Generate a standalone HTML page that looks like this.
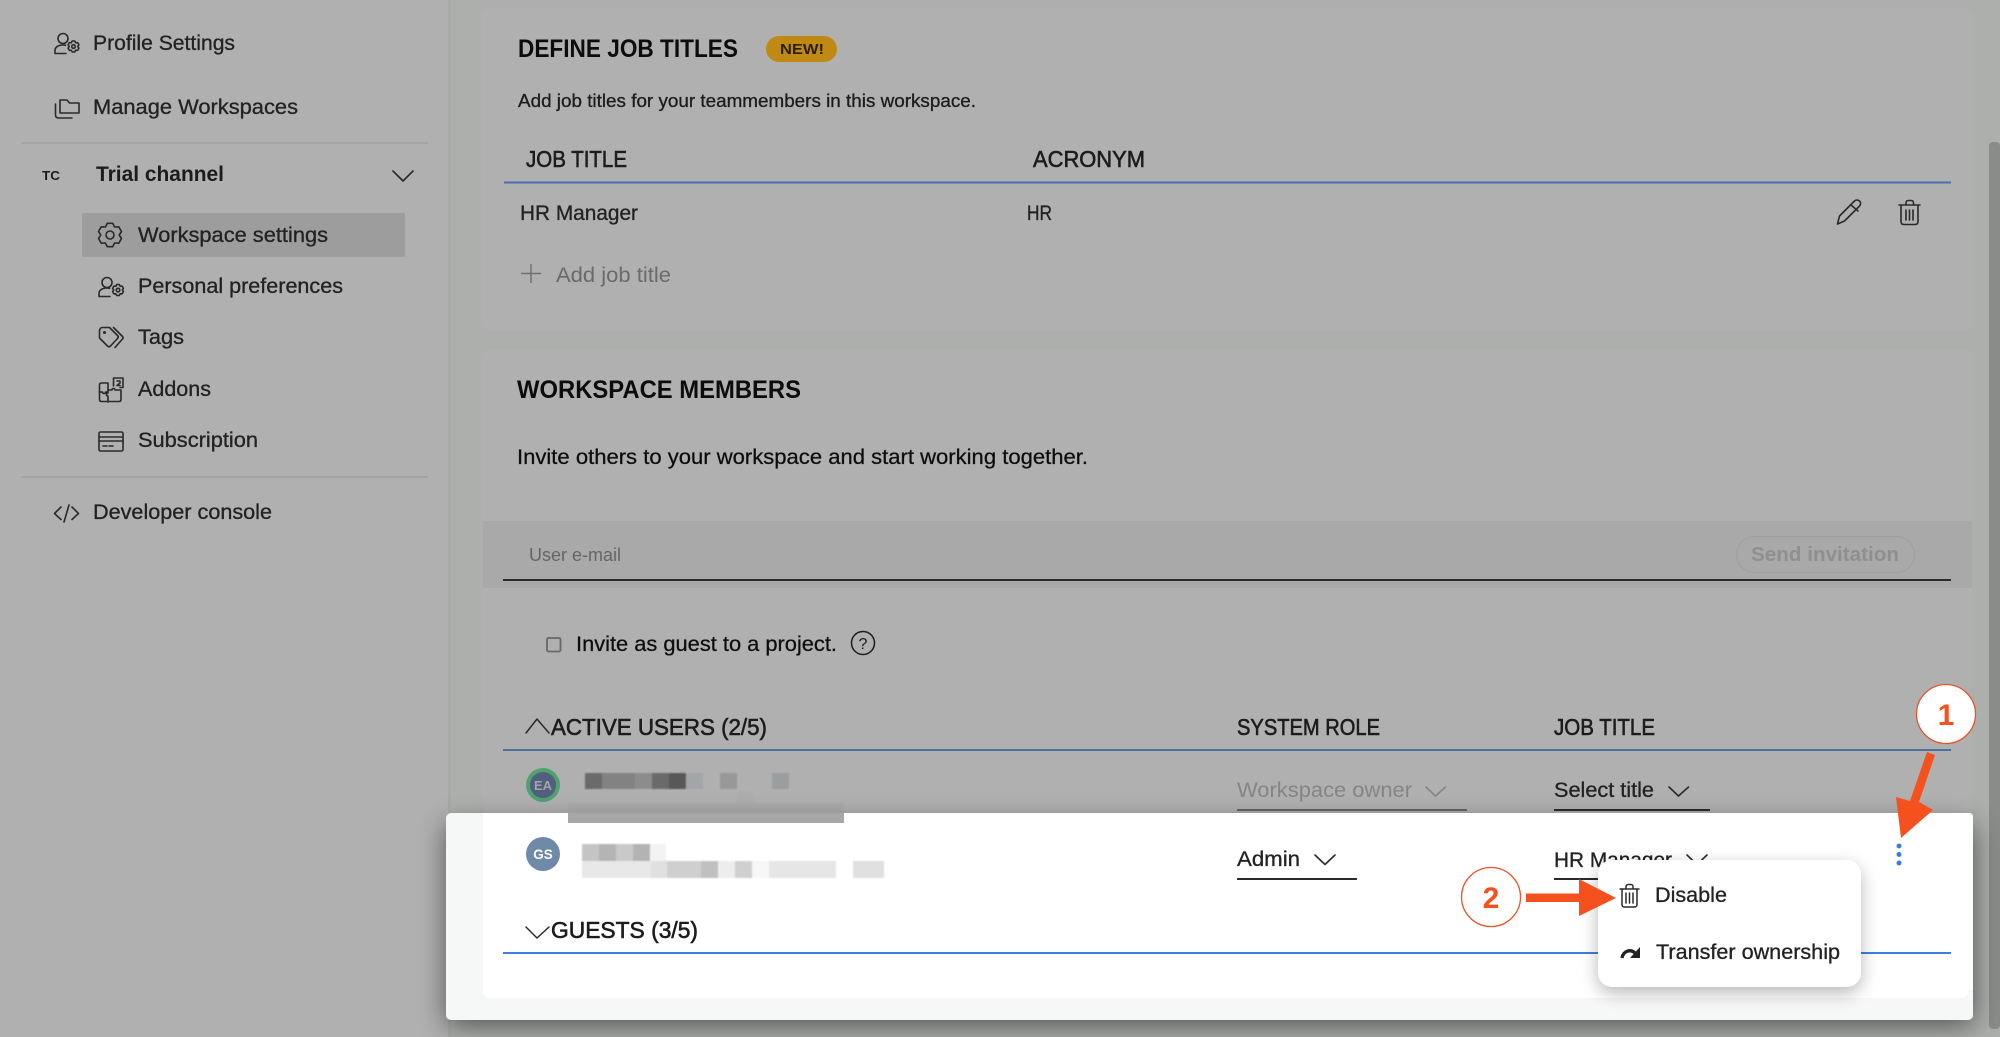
<!DOCTYPE html>
<html lang="en"><head><meta charset="utf-8"><title>Workspace settings</title>
<style>
html,body{margin:0;padding:0;width:2000px;height:1037px;overflow:hidden;background:#b0b0b0}
svg{display:block;position:absolute;left:0;top:0}
text{font-family:"Liberation Sans",sans-serif;fill:#1c1c1c;font-size:20px}
.m{stroke:#1c1c1c;stroke-width:.3px}
.s{font-size:21px;stroke:#222;stroke-width:.3px;fill:#222}
.b{font-weight:700}
.h{font-size:25px;font-weight:700;fill:#0c0c0c}
.th{font-size:23px;stroke:#1c1c1c;stroke-width:.6px}
.ic{fill:none;stroke:#2a2a2a;stroke-width:1.6;stroke-linecap:round;stroke-linejoin:round}
.or{fill:#f4511e}
</style></head><body>
<svg width="2000" height="1037" viewBox="0 0 2000 1037" xmlns="http://www.w3.org/2000/svg">
<defs>
<filter id="sh" x="-10%" y="-30%" width="120%" height="170%"><feGaussianBlur stdDeviation="14"/></filter>
<filter id="sh2" x="-30%" y="-30%" width="160%" height="170%"><feGaussianBlur stdDeviation="9"/></filter>
<filter id="bl" x="-5%" y="-20%" width="110%" height="140%"><feGaussianBlur stdDeviation=".7"/></filter>
</defs>
<!-- backgrounds -->
<rect width="2000" height="1037" fill="#adafad"/>
<rect width="448" height="1037" fill="#b0b0b0"/>
<rect x="448" width="3" height="1037" fill="#a9a9a9"/>
<rect x="483" y="8" width="1489" height="322" rx="8" fill="#b0b0b0"/>
<rect x="483" y="350" width="1489" height="660" rx="8" fill="#b0b0b0"/>
<rect x="483" y="521" width="1489" height="67" fill="#a9a9a9"/>
<rect x="1989" y="142" width="11" height="887" rx="4" fill="#8a8c8a"/>

<!-- sidebar -->
<text x="93" y="50" class="s" textLength="142" lengthAdjust="spacingAndGlyphs">Profile Settings</text>
<g class="ic"><circle cx="63" cy="38.500" r="5"/><path d="M55 53.500v-3c0-3.500 3.500-5.500 8-5.500 1 0 1.500 0 2.500.3M55 53.500h11"/><g transform="translate(73.500 46.500) scale(.47)"><path vector-effect="non-scaling-stroke" d="M2.700-11.700L4.600-8L8.800-8.200L11.500-3.500L9.200 0L11.500 3.500L8.800 8.200L4.600 8L2.700 11.700H-2.700L-4.600 8L-8.800 8.200L-11.500 3.500L-9.200 0L-11.500-3.500L-8.800-8.200L-4.600-8L-2.700-11.700Z"/><circle vector-effect="non-scaling-stroke" r="3.800"/></g></g>
<text x="93" y="114" class="s" textLength="205" lengthAdjust="spacingAndGlyphs">Manage Workspaces</text>
<g class="ic"><path d="M60 113v-13h7l2.500 3H79v10z"/><path d="M55.500 104v11c0 2 1 3 3 3H72"/></g>
<rect x="21" y="142.500" width="407" height="1" fill="#989898"/>
<text x="42" y="180" class="b" style="font-size:13px" textLength="18" lengthAdjust="spacingAndGlyphs">TC</text>
<text x="96" y="181" class="b" style="font-size:21px" textLength="128" lengthAdjust="spacingAndGlyphs">Trial channel</text>
<path class="ic" d="M393 171l10 10 10-10"/>
<rect x="82" y="213" width="323" height="44" rx="2" fill="#9d9d9d"/>
<text x="138" y="242" class="s" textLength="190" lengthAdjust="spacingAndGlyphs">Workspace settings</text>
<g class="ic"><g transform="translate(110 235)"><path d="M2.700-11.700L4.600-8L8.800-8.200L11.500-3.500L9.200 0L11.500 3.500L8.800 8.200L4.600 8L2.700 11.700H-2.700L-4.600 8L-8.800 8.200L-11.500 3.500L-9.200 0L-11.500-3.500L-8.800-8.200L-4.600-8L-2.700-11.700Z"/><circle r="4"/></g></g>
<text x="138" y="293" class="s" textLength="205" lengthAdjust="spacingAndGlyphs">Personal preferences</text>
<g class="ic"><circle cx="107" cy="282.500" r="5"/><path d="M99 296.500v-3c0-3.500 3.500-5.500 8-5.500 1 0 1.500 0 2.500.3M99 296.500h11"/><g transform="translate(118 290) scale(.47)"><path vector-effect="non-scaling-stroke" d="M2.700-11.700L4.600-8L8.800-8.200L11.500-3.500L9.200 0L11.500 3.500L8.800 8.200L4.600 8L2.700 11.700H-2.700L-4.600 8L-8.800 8.200L-11.500 3.500L-9.200 0L-11.500-3.500L-8.800-8.200L-4.600-8L-2.700-11.700Z"/><circle vector-effect="non-scaling-stroke" r="3.800"/></g></g>
<text x="138" y="344" class="s" textLength="46" lengthAdjust="spacingAndGlyphs">Tags</text>
<g class="ic"><path d="M99.500 331c0-2 1-3.500 3-3.500h7l8 8c1 1 1 2 0 3l-7 7.500c-1 1-2 1-3 0l-8-8z"/><path d="M113.500 327.500l9 9c.8.8.8 1.500 0 2.500l-7.500 8.500"/><circle cx="104.500" cy="332.500" r=".7"/></g>
<text x="138" y="396" class="s" textLength="73" lengthAdjust="spacingAndGlyphs">Addons</text>
<g class="ic"><path d="M99.500 385q0-2 2-2h6.500v7h4c0-2 3-2 3 0h6v9.500q0 2-2 2h-17.500q-2 0-2-2z"/><path d="M108 390v3c-2 0-2 3 0 3v6M99.500 392h3c0 2 3 2 3 0h2.500"/><path d="M113.500 386v-8h9.500v9.500h-3M117 381h3v2l-3 2.500h3"/></g>
<text x="138" y="447" class="s" textLength="120" lengthAdjust="spacingAndGlyphs">Subscription</text>
<g class="ic"><rect x="99" y="432" width="24" height="19" rx="1.500"/><path d="M99 437h24M99 441h24M103 446h4M109 446h4"/></g>
<rect x="21" y="476.500" width="407" height="1" fill="#989898"/>
<text x="93" y="519" class="s" textLength="179" lengthAdjust="spacingAndGlyphs">Developer console</text>
<g class="ic"><path d="M61 507l-6.500 6.500 6.500 6M72 507l6.500 6.500-6.500 6M69 505l-5 17"/></g>

<!-- job titles -->
<text x="518" y="57" class="h" textLength="220" lengthAdjust="spacingAndGlyphs">DEFINE JOB TITLES</text>
<rect x="766" y="36" width="71" height="26" rx="13" fill="#c08a12"/>
<text x="780" y="54" class="b" style="font-size:15px;fill:#2a1e00" textLength="44" lengthAdjust="spacingAndGlyphs">NEW!</text>
<text x="518" y="107" style="font-size:18px" class="m" textLength="458" lengthAdjust="spacingAndGlyphs">Add job titles for your teammembers in this workspace.</text>
<text x="526" y="167" class="th" textLength="101" lengthAdjust="spacingAndGlyphs">JOB TITLE</text>
<text x="1033" y="167" class="th" textLength="112" lengthAdjust="spacingAndGlyphs">ACRONYM</text>
<rect x="504" y="181.500" width="1447" height="2" fill="#4a6eae"/>
<text x="520" y="220" class="s" textLength="118" lengthAdjust="spacingAndGlyphs">HR Manager</text>
<text x="1027" y="220" class="s" textLength="25" lengthAdjust="spacingAndGlyphs">HR</text>
<path d="M531 264v19M521 273.500h20" fill="none" stroke="#6f6f6f" stroke-width="1.400"/>
<text x="556" y="282" style="fill:#6a6a6a;font-size:21px" textLength="115" lengthAdjust="spacingAndGlyphs">Add job title</text>
<g class="ic"><path d="M1837.500 224l2-8 15-15c1.500-1.300 3.500-1.300 5 0 1.500 1.500 1.500 3.500 0 5l-15 15z"/><path d="M1851 205l7 6"/></g>
<g class="ic"><path d="M1899 205h21M1906 205v-2c0-1.500 1-2.500 2-2.500h3.500c1 0 2 1 2 2.500v2"/><path d="M1901 205.500v16c0 2 1 3 3 3h11c2 0 3-1 3-3v-16M1906 210v10M1909.500 210v10M1913 210v10"/></g>

<!-- workspace members -->
<text x="517" y="398" class="h" textLength="284" lengthAdjust="spacingAndGlyphs">WORKSPACE MEMBERS</text>
<text x="517" y="464" class="m" textLength="571" lengthAdjust="spacingAndGlyphs" style="font-size:21px;fill:#0c0c0c">Invite others to your workspace and start working together.</text>
<text x="529" y="561" style="font-size:18px;fill:#666" textLength="92" lengthAdjust="spacingAndGlyphs">User e-mail</text>
<rect x="503" y="579" width="1448" height="2" fill="#2a2a2a"/>
<rect x="1736.500" y="536.500" width="178" height="36" rx="18" fill="none" stroke="#a0a0a0" stroke-width="1.200"/>
<text x="1751" y="561" class="b" style="fill:#8f8f8f" textLength="148" lengthAdjust="spacingAndGlyphs">Send invitation</text>
<rect x="547" y="638" width="13.500" height="13.500" rx="1.500" fill="none" stroke="#686868" stroke-width="1.800"/>
<text x="576" y="651" class="m" style="font-size:21px;fill:#0c0c0c" textLength="261" lengthAdjust="spacingAndGlyphs">Invite as guest to a project.</text>
<circle cx="863" cy="643" r="11.500" fill="none" stroke="#1c1c1c" stroke-width="1.500"/>
<text x="863" y="649" text-anchor="middle" style="font-size:16px">?</text>

<!-- table header -->
<path class="ic" d="M526 733l11-14 12 14" style="stroke-width:1.500"/>
<text x="551" y="735" class="th" textLength="216" lengthAdjust="spacingAndGlyphs">ACTIVE USERS (2/5)</text>
<text x="1237" y="735" class="th" textLength="143" lengthAdjust="spacingAndGlyphs">SYSTEM ROLE</text>
<text x="1554" y="735" class="th" textLength="101" lengthAdjust="spacingAndGlyphs">JOB TITLE</text>
<rect x="503" y="749" width="1448" height="2" fill="#52709f"/>

<!-- row 1 -->
<circle cx="543" cy="785" r="17" fill="#4fa26e"/><circle cx="543" cy="785" r="13" fill="#4f5f7d"/>
<text x="543" y="790" text-anchor="middle" class="b" style="font-size:13px;fill:#a5a5a5">EA</text>
<g filter="url(#bl)">
<rect x="585" y="773" width="17" height="16" fill="#6a6a6a"/><rect x="602" y="773" width="33" height="16" fill="#828282"/><rect x="635" y="773" width="17" height="16" fill="#8c8c8c"/><rect x="652" y="773" width="17" height="16" fill="#6a6a6a"/><rect x="669" y="773" width="17" height="16" fill="#595959"/><rect x="686" y="773" width="17" height="16" fill="#a3a6a8"/><rect x="720" y="773" width="17" height="16" fill="#989898"/><rect x="772" y="773" width="17" height="16" fill="#9a9ea1"/>
<rect x="568" y="803" width="276" height="10" fill="#ababab"/><rect x="737" y="790" width="17" height="13" fill="#adadad"/>
</g>
<text x="1237" y="797" style="fill:#858585;font-size:21px" textLength="175" lengthAdjust="spacingAndGlyphs">Workspace owner</text>
<path class="ic" d="M1426 787l9.500 9 10-9" style="stroke:#858585"/>
<rect x="1237" y="809" width="230" height="2" fill="#666"/>
<text x="1554" y="797" class="s" textLength="100" lengthAdjust="spacingAndGlyphs">Select title</text>
<path class="ic" d="M1669 787l9.500 9 10-9"/>
<rect x="1554" y="809" width="156" height="2" fill="#2a2a2a"/>

<!-- highlighted panel -->
<rect x="447" y="825" width="1526" height="200" fill="#000" opacity=".55" filter="url(#sh)"/>
<rect x="446" y="813" width="1527" height="207" rx="5" fill="#f6f8f7"/>
<path d="M483 813H1968V990q0 8-8 8H491q-8 0-8-8z" fill="#fff"/>
<path d="M1968 813h1q4 0 4 4V990h-5z" fill="#fff"/>
<rect x="568" y="813" width="276" height="10" fill="#a7a7a7"/>

<circle cx="543" cy="854" r="17" fill="#6f8aa8"/>
<text x="543" y="859" text-anchor="middle" class="b" style="font-size:13.500px;fill:#fff">GS</text>
<g filter="url(#bl)">
<rect x="582" y="844" width="17" height="17" fill="#c4c4c4"/><rect x="599" y="844" width="17" height="17" fill="#b4b4b4"/><rect x="616" y="844" width="17" height="17" fill="#c9c9c9"/><rect x="633" y="844" width="17" height="17" fill="#b3b3b3"/><rect x="650" y="844" width="16" height="17" fill="#f3f3f3"/>
<rect x="582" y="861" width="69" height="17" fill="#e8e8e8"/><rect x="651" y="861" width="16" height="17" fill="#e0e0e0"/><rect x="667" y="861" width="34" height="17" fill="#cfcfcf"/><rect x="701" y="861" width="17" height="17" fill="#c0c0c0"/><rect x="718" y="861" width="17" height="17" fill="#ededed"/><rect x="735" y="861" width="17" height="17" fill="#d0d0d0"/><rect x="752" y="861" width="17" height="17" fill="#f7f7f7"/><rect x="769" y="861" width="67" height="17" fill="#e6e6e6"/><rect x="853" y="861" width="31" height="17" fill="#e0e0e0"/>
</g>
<text x="1237" y="866" class="s" textLength="63" lengthAdjust="spacingAndGlyphs">Admin</text>
<path class="ic" d="M1315 855l10 9.500 10-9.500"/>
<rect x="1237" y="878" width="120" height="2" fill="#2a2a2a"/>
<text x="1554" y="867" class="s" textLength="118" lengthAdjust="spacingAndGlyphs">HR Manager</text>
<path class="ic" d="M1687 855l10 9.500 10-9.500"/>
<rect x="1554" y="878" width="46" height="2" fill="#2a2a2a"/>
<circle cx="1899" cy="846" r="2.500" fill="#3b7ddd"/><circle cx="1899" cy="854.500" r="2.500" fill="#3b7ddd"/><circle cx="1899" cy="863" r="2.500" fill="#3b7ddd"/>

<path class="ic" d="M526 927l11 11 12-11" style="stroke-width:1.500"/>
<text x="551" y="938" class="th" textLength="147" lengthAdjust="spacingAndGlyphs">GUESTS (3/5)</text>
<rect x="503" y="952" width="1448" height="2" fill="#3d80e0"/>

<!-- popup -->
<rect x="1598" y="866" width="263" height="127" rx="14" fill="#000" opacity=".28" filter="url(#sh2)"/>
<rect x="1598" y="860" width="263" height="127" rx="14" fill="#fff"/>
<g class="ic" style="stroke-width:1.500"><path d="M1620 889h19M1626 889v-2.500c0-1 .8-2 2-2h3c1.200 0 2 1 2 2v2.500"/><path d="M1622 889.500v15c0 1.500 1 2.500 2.500 2.500h10c1.500 0 2.500-1 2.500-2.500v-15M1626 893v10M1629.500 893v10M1633 893v10"/></g>
<text x="1655" y="902" class="s" textLength="72" lengthAdjust="spacingAndGlyphs">Disable</text>
<path d="M1622 958c1-7 9-10 14-4" fill="none" stroke="#222" stroke-width="3.400"/><path d="M1640 947v11h-10z" fill="#222"/>
<text x="1656" y="959" class="s" textLength="184" lengthAdjust="spacingAndGlyphs">Transfer ownership</text>

<!-- callouts -->
<circle cx="1946" cy="714" r="29.500" fill="#fff" stroke="#e8532a" stroke-width="1.300"/>
<text x="1946" y="725" text-anchor="middle" class="b or" style="font-size:30px">1</text>
<path class="or" d="M1927 752l8 3-16 47 14 8-32 28-5-41 14 4z"/>
<circle cx="1491" cy="897" r="29.500" fill="#fff" stroke="#e8532a" stroke-width="1.300"/>
<text x="1491" y="908" text-anchor="middle" class="b or" style="font-size:30px">2</text>
<path class="or" d="M1526 893.500h53V879l37 19-37 18v-14h-53z"/>
</svg>
</body></html>
